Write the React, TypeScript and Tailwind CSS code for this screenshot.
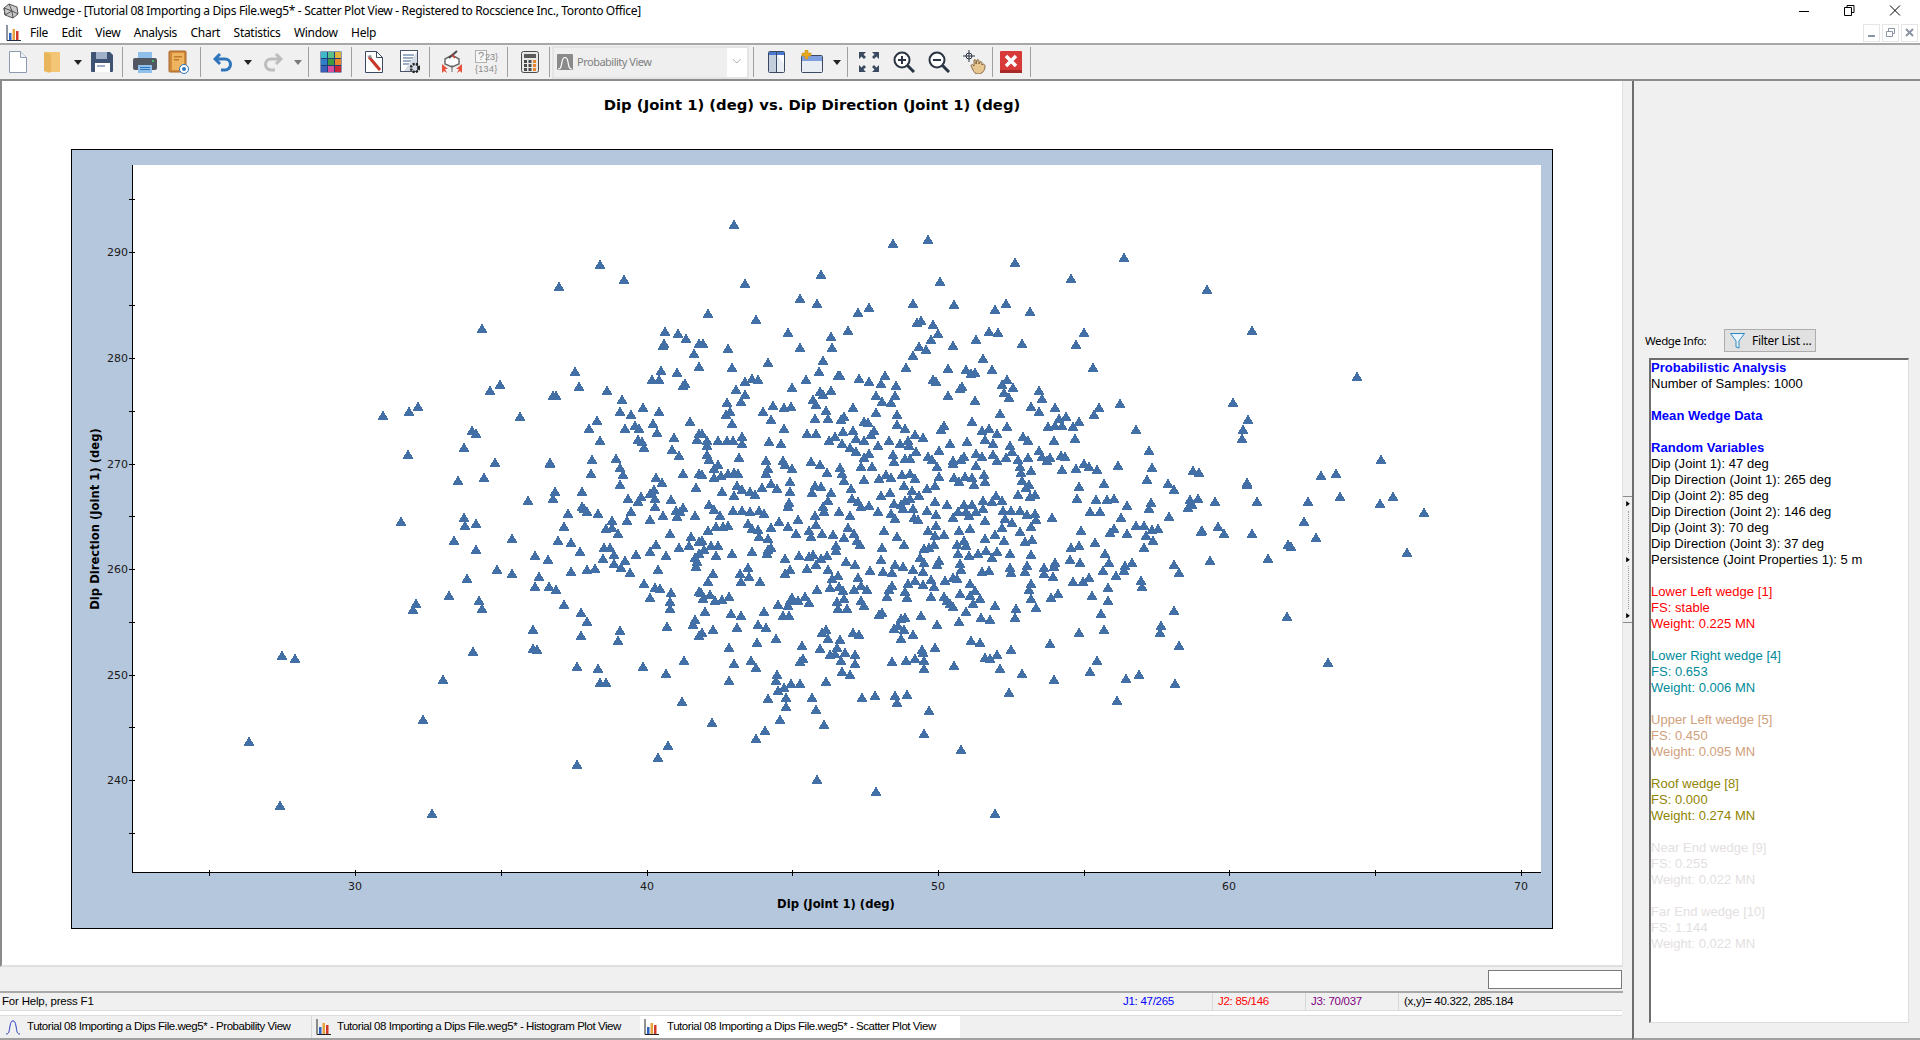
import React from "react";

const ptsA = `1141,138 1213,176 1018,194 787,300 1336,308 1375,313 1399,327 1333,340 1330,344 1437,340 1423,363 1437,396 1066,409 1324,406 1372,411 1297,429 1318,429 1396,440 1388,446 841,442 811,457 1078,447 1162,457 1000,470 1009,470 1207,480 595,498 568,510 489,520 1201,510 1234,518 1270,502 1318,510 901,523 1132,533 1411,535 1299,540 1108,553 1216,553 1245,547 1258,553 757,558 769,566 1312,563 1141,583 1254,581 1266,586 1272,601 1363,576 1432,582 1438,566 733,601 565,619 1357,608 1378,621 1117,631 1188,629 826,639 990,639 991,643 1200,652 1114,667 1209,670 1390,667 1437,667 793,677 714,685 1308,677 1327,690 1201,695 1429,702 1087,712 1006,712 1000,731 1303,707 1291,719 1306,731 1264,725 1225,730 1255,738 1354,733 925,735 1087,751 1093,755 1102,764 1306,751 1390,753 1369,761 1381,765 1372,777 1426,773 1045,770 1135,770 1234,765 1330,773 733,778 544,788 769,793 736,799 1222,786 1177,786 1291,783 1033,801 1159,806 1177,803 1195,819 1351,819 1414,826 703,836 877,831 1015,836 1053,841 1438,839 1309,847 1408,849 1153,854 1170,856 1378,856 1291,864 769,859 1081,864 1183,873 946,874 1249,872 1339,875 1426,879 1438,870 985,884 1150,882 1216,887 1183,895 1204,905 1432,890 1429,903 832,910 1102,910 1126,907 1315,910 877,920 1054,915 1231,917 958,928 741,932 1273,945 946,953 988,953 1009,960 1306,956 1321,958 1354,968 1438,966 687,975 1291,981 778,989 587,996 580,1011 787,1009 1351,991 1351,1009 1033,998 1084,1019 1426,1036 1420,1049 1102,1041 1342,1054 940,1062 1201,1064 1084,1077 1438,1077 1195,1090 760,1117 940,1109 952,1114 187,1128 226,1135 1393,1140 1072,1157 1135,1160 1270,1157 1339,1173 670,1188 1141,1195 1159,1195 1387,1244 610,1290 88,1345 1345,1355 1315,1385 1072,1403 180,1507 637,1527`;
const ptsB = `103,37 580,85 685,75 1273,121 946,133 364,164 136,186 721,181 1114,174 301,224 351,237 640,237 763,241 919,237 25,262 886,252 991,257 475,260 508,247 169,277 650,285 664,280 699,292 445,305 263,311 715,314 868,308 895,310 1153,310 394,320 829,328 694,328 967,338 1129,341 8,340 85,351 301,348 397,348 657,346 679,353 760,344 640,368 850,378 370,381 205,386 97,399 619,399 744,401 797,404 877,404 1180,399 812,416 826,411 358,409 415,420 421,421 556,419 157,427 175,429 136,434 319,429 478,427 508,434 699,429 708,436 921,430 906,442 544,440 589,444 786,447 781,452 939,449 109,455 277,450 394,457 360,461 370,467 136,467 529,470 586,470 744,470 913,463 1017,459 927,476 1026,478 124,485 340,480 349,492 546,485 574,488 825,482 82,488 220,495 253,500 274,497 460,500 993,497 1066,500 1198,500 1261,490 190,510 91,511 379,508 529,513 1018,510 901,515 1183,519 79,519 592,518 344,528 385,528 214,530 433,523 424,530 1099,523 1078,529 1138,535 97,540 493,536 505,538 817,535 591,543 1045,548 1066,547 1087,545 1120,548 253,553 733,545 724,556 616,553 847,560 868,553 922,548 460,558 430,562 523,559 514,568 892,566 1309,556 322,566 349,566 6,567 646,568 670,576 21,583 55,583 82,583 100,583 127,573 127,593 208,586 244,593 388,583 406,573 427,591 469,578 492,583 568,583 600,591 625,585 628,598 751,593 802,586 856,581 880,593 970,573 985,583 1063,583 1126,578 535,596 450,603 22,598 469,611 22,620 649,613 718,609 931,596 937,613 1018,609 1348,609 580,620 508,616 829,618 27,632 118,628 199,635 250,636 334,637 492,627 616,630 631,629 684,625 696,632 792,625 784,631 846,624 880,620 892,635 919,627 955,632 985,628 1027,624 1051,628 1084,622 1096,624 1042,634 583,637 760,636 760,643 55,645 361,644 256,646 421,653 712,651 829,648 961,651 1153,642 1166,649 1255,647 43,654 205,654 277,654 484,651 517,649 1129,654 1087,657 1192,657 1357,652 994,659 964,664 382,664 199,667 85,667 103,666 115,667 427,667 6,669 64,672 493,682 43,678 607,670 631,667 559,669 574,678 538,681 646,680 718,675 762,678 796,674 817,678 853,669 856,688 778,688 433,685 271,687 1342,682 967,685 1213,692 1405,692 187,702 112,699 214,693 346,697 364,700 232,706 454,705 613,697 706,697 823,696 988,695 978,704 1138,700 1423,707 127,708 67,712 151,714 271,714 337,715 394,715 571,715 682,705 637,711 166,720 103,723 543,724 658,723 955,720 991,725 1006,722 889,724 1132,730 457,730 385,735 475,738 616,735 631,732 850,736 907,735 877,738 706,738 1189,733 1222,733 1243,730 1354,740 27,745 268,740 265,750 583,743 741,745 793,745 817,745 484,750 508,748 604,745 1282,748 370,752 43,758 100,762 127,760 151,763 178,760 193,768 373,765 418,763 535,763 610,757 640,757 682,760 775,763 850,757 910,760 934,760 961,760 1348,757 1171,765 1201,765 61,773 346,773 451,775 574,770 586,781 709,772 799,765 829,765 760,778 808,775 982,772 1006,770 1057,778 1264,778 1408,776 295,785 238,790 643,778 655,785 916,781 856,786 1009,784 145,793 85,798 49,801 70,801 349,796 214,804 265,801 445,805 709,800 907,804 937,792 994,801 1309,800 1333,800 1373,806 1357,810 1243,806 157,807 175,810 25,813 328,813 685,812 778,811 811,808 553,811 961,814 1144,813 1231,817 1282,820 289,820 367,820 400,822 463,820 178,827 334,826 433,830 592,827 706,825 733,822 886,823 1339,825 205,832 856,831 913,836 976,840 997,834 1360,836 6,837 793,836 1186,841 472,836 481,847 34,849 55,849 409,851 613,847 772,848 799,850 703,847 1138,850 1333,854 546,854 12,861 157,864 214,856 97,869 205,860 202,870 409,863 673,857 688,855 859,862 892,865 1114,854 1216,869 835,869 49,875 298,875 328,877 340,872 382,875 775,870 808,875 931,869 994,872 364,882 256,882 661,880 877,880 544,884 438,890 1111,884 1141,894 1228,894 1297,894 673,892 718,888 1066,892 349,897 466,897 586,897 610,902 712,897 781,895 982,900 1423,897 1276,901 145,906 322,907 511,912 385,910 640,910 1033,906 1063,904 271,911 931,906 784,910 1210,912 1273,912 39,920 121,921 256,921 550,916 577,919 670,915 847,915 868,914 976,915 934,917 1033,921 1060,928 1438,918 148,928 415,925 475,931 1249,925 397,932 772,932 760,930 1168,930 25,940 124,940 181,940 646,938 736,937 694,935 625,945 1120,940 1150,942 1324,937 484,950 811,945 994,945 670,949 703,953 391,955 418,953 577,950 1327,954 352,960 463,960 502,960 568,960 430,963 988,960 1225,955 616,965 781,970 826,963 3,968 30,973 88,978 1075,972 1177,975 316,978 811,975 694,978 622,980 733,978 562,979 277,982 841,984 1054,981 10,984 46,988 67,986 271,988 295,988 433,985 484,988 742,990 994,985 1225,988 328,994 235,998 265,1001 412,991 493,1002 820,996 751,996 760,1003 886,1001 1009,1006 949,1009 415,1009 442,1008 16,1016 193,1016 94,1021 799,1016 1204,1021 1423,1013 124,1028 250,1028 268,1026 547,1018 538,1024 664,1026 616,1031 604,1034 844,1031 871,1036 946,1033 778,1041 175,1049 712,1049 595,1051 112,1056 199,1056 40,1061 583,1059 613,1061 379,1063 1213,1061 1384,1053 1381,1070 7,1071 367,1071 460,1071 478,1076 1138,1071 640,1076 385,1085 229,1084 421,1087 604,1084 172,1094 814,1089 841,1094 1051,1097 88,1107 307,1102 361,1109 412,1107 706,1107 667,1113 1438,1103 934,1114 436,1120 391,1126 406,1124 466,1126 670,1120 892,1125 856,1132 871,1135 310,1135 301,1143 154,1140 424,1140 577,1142 619,1140 646,1135 673,1140 1192,1140 103,1148 466,1148 763,1152 169,1158 673,1161 901,1160 1171,1168 427,1168 232,1175 451,1175 967,1173 1318,1175 1279,1185 88,1191 229,1191 379,1193 274,1198 301,1198 1063,1188 1426,1200 253,1208 235,1216 928,1221 526,1228 622,1226 586,1228 259,1234 337,1233 487,1234 205,1236 1252,1241 592,1246 259,1257 349,1264 687,1267 241,1289 37,1297 373,1302 196,1318 673,1325 169,1337 784,1365 352,1441 529,1471 886,1527`;
const ptsC = `622,153 757,255 1072,371 700,437 745,480 730,505 727,528 1144,581 580,610 598,614 964,622 1009,616 742,640 742,646 1021,675 595,680 571,684 646,687 772,687 925,687 1141,692 1180,674 577,696 565,703 1273,715 913,738 655,750 607,760 604,764 673,768 757,770 949,778 865,796 874,801 805,832 630,836 1222,817 862,978 985,1094`;

// zoom crops were 3x wide and 2.53x tall
const toPath = (s: string, ox: number, oy: number) =>
  s
    .split(" ")
    .map((p) => {
      const [a, b] = p.split(",").map(Number);
      const x = Math.round(ox + a / 3 - 71);
      const y = Math.round(oy + b / 2.529 - 149) - 1;
      return `M${x} ${y - 5}l5.5 10h-11z`;
    })
    .join("");

const scatter = toPath(ptsA, 220, 210) + toPath(ptsB, 700, 210) + toPath(ptsC, 1000, 230);

const xTicks = [209, 355, 501, 647, 792, 938, 1084, 1229, 1375, 1521];
const xLabels = [
  [355, "30"],
  [647, "40"],
  [938, "50"],
  [1229, "60"],
  [1521, "70"],
] as const;
const yTicks = [199, 252, 305, 358, 411, 464, 516, 569, 622, 675, 727, 780, 833];
const yLabels = [
  [252, "290"],
  [358, "280"],
  [464, "270"],
  [569, "260"],
  [675, "250"],
  [780, "240"],
] as const;

const ScatterChart = () => (
  <svg width="1482" height="780" className="block" fontFamily="'DejaVu Sans', sans-serif">
    <rect x="61" y="16" width="1409" height="707" fill="#ffffff" />
    <path d={scatter} fill="#4270a6" shapeRendering="crispEdges" />
    <g stroke="#000000" strokeWidth="1" shapeRendering="crispEdges">
      <rect x="0.5" y="0.5" width="1481" height="779" fill="none" />
      <path d="M61.5 16V723.5H1470" fill="none" />
      {xTicks.map((x) => (
        <line key={x} x1={x - 71 + 0.5} x2={x - 71 + 0.5} y1="721" y2="727" />
      ))}
      {yTicks.map((y) => (
        <line key={y} x1="58" x2="64" y1={y - 149 + 0.5} y2={y - 149 + 0.5} />
      ))}
    </g>
    <g fontSize="11" fill="#1a1a1a">
      {xLabels.map(([x, t]) => (
        <text key={t} x={x - 71} y="741" textAnchor="middle">
          {t}
        </text>
      ))}
      {yLabels.map(([y, t]) => (
        <text key={t} x="57" y={y - 149 + 4} textAnchor="end">
          {t}
        </text>
      ))}
    </g>
    <text x="765" y="759" textAnchor="middle" fontSize="11.6" fontWeight="700" fill="#000000">
      Dip (Joint 1) (deg)
    </text>
    <text transform="translate(28 370) rotate(-90)" textAnchor="middle" fontSize="11.6" fontWeight="700" fill="#000000">
      Dip Direction (Joint 1) (deg)
    </text>
  </svg>
);

const BarsIcon = ({ line = "#1f2a44" }: { line?: string }) => (
  <svg width="16" height="18" viewBox="0 0 16 18">
    <path d="M1 1v15.5h14" fill="none" stroke={line} strokeWidth="1" />
    <rect x="3" y="9" width="2.5" height="7" fill="#2f63c4" />
    <rect x="6.5" y="5" width="2.5" height="11" fill="#e8a23c" />
    <rect x="10" y="7" width="2.5" height="9" fill="#d23a2a" />
  </svg>
);

const Drop = ({ light = false }: { light?: boolean }) => (
  <svg width="8" height="5" viewBox="0 0 8 5">
    <path d="M0 0h8L4 5z" fill={light ? "#7a7a7a" : "#222222"} />
  </svg>
);

const Sep = () => <div className="w-px h-[30px] bg-[#a0a0a0]" />;

const Slot = ({ className, children }: { className: string; children?: React.ReactNode }) => (
  <div className={`${className} h-full flex items-center justify-center shrink-0`}>{children}</div>
);

const Toolbar = () => (
  <div className="h-[38px] shrink-0 flex items-center bg-[#f0f0f0] border-t-2 border-b-2 border-t-[#a8a8a8] border-b-[#8c8c8c]">
    <Slot className="w-[35px]">
      <svg width="20" height="24" viewBox="0 0 20 24">
        <path d="M1.5 1.5h11l6 6v15h-17z" fill="#ffffff" stroke="#8d9bb0" />
        <path d="M12.5 1.5v6h6" fill="#eef1f5" stroke="#8d9bb0" />
      </svg>
    </Slot>
    <Slot className="w-[36px]">
      <svg width="20" height="24" viewBox="0 0 20 24">
        <path d="M1 2h16v20l-9 0-2 1-5-2z" fill="#f2c675" />
        <path d="M1 2l7 2v18l-3 0-4-1z" fill="#e8b45c" />
      </svg>
    </Slot>
    <Slot className="w-[13px]"><Drop /></Slot>
    <Slot className="w-[36px]">
      <svg width="24" height="24" viewBox="0 0 24 24">
        <path d="M1 3a1 1 0 0 1 1-1h18l3 3v16a1 1 0 0 1-1 1H2a1 1 0 0 1-1-1z" fill="#3f5475" />
        <rect x="6" y="2" width="11" height="7" fill="#9fb0c8" />
        <rect x="5" y="13" width="15" height="9" fill="#ffffff" />
        <rect x="7" y="15" width="8" height="2" fill="#9fb0c8" />
      </svg>
    </Slot>
    <Slot className="w-[4px]"><Sep /></Slot>
    <Slot className="w-[42px]">
      <svg width="24" height="22" viewBox="0 0 24 22">
        <rect x="5" y="1" width="14" height="7" fill="#8fc0ec" />
        <path d="M2 7h20a2 2 0 0 1 2 2v8a2 2 0 0 1-2 2H2a2 2 0 0 1-2-2V9a2 2 0 0 1 2-2z" fill="#525861" />
        <rect x="19" y="9" width="2" height="2" fill="#3fbf6a" />
        <rect x="5" y="14" width="14" height="8" fill="#8fc0ec" />
        <rect x="7" y="16" width="10" height="1" fill="#2f75bb" />
        <rect x="7" y="18" width="10" height="1" fill="#2f75bb" />
      </svg>
    </Slot>
    <Slot className="w-[26px]">
      <svg width="22" height="24" viewBox="0 0 22 24">
        <rect x="1" y="1" width="17" height="21" rx="1" fill="#d08a3c" stroke="#a9692a" />
        <rect x="4" y="3" width="12" height="17" fill="#efb45f" />
        <rect x="6" y="6" width="8" height="1.5" fill="#c27a2c" />
        <rect x="6" y="9" width="5" height="1.5" fill="#c27a2c" />
        <circle cx="16" cy="19" r="4.5" fill="#ffffff" stroke="#2f75bb" />
        <circle cx="16" cy="19" r="2" fill="#2f75bb" />
      </svg>
    </Slot>
    <Slot className="w-[6px]" />
    <Slot className="w-[4px]"><Sep /></Slot>
    <Slot className="w-[42px]">
      <svg width="20" height="20" viewBox="0 0 20 20">
        <path d="M7 2 2 7l5 5M3 7h9a5 5 0 0 1 0 11H8" fill="none" stroke="#2f75bb" strokeWidth="3" />
      </svg>
    </Slot>
    <Slot className="w-[8px]"><Drop /></Slot>
    <Slot className="w-[42px]">
      <svg width="20" height="20" viewBox="0 0 20 20">
        <path d="M13 2l5 5-5 5M17 7H8a5 5 0 0 0 0 11h4" fill="none" stroke="#bdbdbd" strokeWidth="3" />
      </svg>
    </Slot>
    <Slot className="w-[8px]"><Drop light /></Slot>
    <Slot className="w-[12px]"><Sep /></Slot>
    <Slot className="w-[34px]">
      <svg width="22" height="22" viewBox="0 0 22 22">
        <rect x="0.5" y="0.5" width="21" height="21" fill="#1f3f78" />
        {[
          ["#3fb8c8", 1, 1], ["#5cc08a", 8, 1], ["#e2b23a", 15, 1],
          ["#2f7fc8", 1, 8], ["#3f9a3f", 8, 8], ["#e8842c", 15, 8],
          ["#3a5fb8", 1, 15], ["#d84fa0", 8, 15], ["#c8283a", 15, 15],
        ].map(([c, x, y]) => (
          <rect key={`${x}-${y}`} x={x as number} y={y as number} width="6" height="6" fill={c as string} />
        ))}
      </svg>
    </Slot>
    <Slot className="w-[6px]"><Sep /></Slot>
    <Slot className="w-[40px]">
      <svg width="20" height="24" viewBox="0 0 20 24">
        <path d="M1.5 1.5h11l6 6v15h-17z" fill="#ffffff" stroke="#3a4a60" />
        <path d="M12.5 1.5v6h6" fill="none" stroke="#3a4a60" />
        <path d="M5 7l11 13" stroke="#c8362a" strokeWidth="3" />
        <path d="M3 6l4-1 1 4z" fill="#8a8f96" />
      </svg>
    </Slot>
    <Slot className="w-[32px]">
      <svg width="20" height="24" viewBox="0 0 20 24">
        <rect x="0.5" y="0.5" width="17" height="21" fill="#ffffff" stroke="#4a5568" />
        <path d="M3 5h11M3 8h11M3 11h8M3 14h6" stroke="#7c93b4" strokeWidth="1.5" />
        <path d="M17 2 4 21h13z" fill="#d5dce6" />
        <circle cx="15" cy="18" r="4" fill="none" stroke="#222222" strokeWidth="2.5" strokeDasharray="2 1.2" />
      </svg>
    </Slot>
    <Slot className="w-[6px]"><Sep /></Slot>
    <Slot className="w-[40px]">
      <svg width="24" height="24" viewBox="0 0 24 24">
        <path d="M5 9l7-4 7 4v5l-7 3-7-3z" fill="#ffffff" stroke="#6b6b6b" strokeWidth="1.5" />
        <path d="M9 8 17 1" stroke="#4a4a4a" strokeWidth="2" />
        <path d="M12 5l3 3" stroke="#d83a2a" strokeWidth="1.5" />
        <path d="M12 15v7" stroke="#6b6b6b" />
        <path d="M2 14l6 5H5l2 4-3-2-2 2zM22 14l-6 5h3l-2 4 3-2 2 2z" fill="#e8503a" />
      </svg>
    </Slot>
    <Slot className="w-[30px]">
      <div className="relative w-[24px] h-[26px] text-[9px] leading-[11px] text-[#8a8a8a] font-['Liberation_Sans',sans-serif]">
        <div className="absolute left-0 top-[1px] w-[12px] h-[13px] border border-[#b0b0b0] bg-[#f6f6f6] text-center text-[11px] leading-[11px]">?</div>
        <div className="absolute right-[1px] top-[3px]">{"23}"}</div>
        <div className="absolute left-0 top-[15px] tracking-[0.3px]">{"{134}"}</div>
      </div>
    </Slot>
    <Slot className="w-[10px]"><Sep /></Slot>
    <Slot className="w-[35px]">
      <svg width="18" height="22" viewBox="0 0 18 22">
        <rect x="0.5" y="0.5" width="17" height="21" rx="2" fill="#e8e8e8" stroke="#4a4a4a" />
        <rect x="3" y="3" width="12" height="4" fill="#5a5a5a" />
        {[9, 13, 17].map((y) => (
          <g key={y}>
            <rect x="3" y={y} width="3" height="3" fill="#4a4a4a" />
            <rect x="7.5" y={y} width="3" height="3" fill="#4a4a4a" />
            <rect x="12" y={y} width="3" height="3" fill="#e8842c" />
          </g>
        ))}
      </svg>
    </Slot>
    <Slot className="w-[5px]"><Sep /></Slot>
    <div className="w-[197px] h-[33px] shrink-0 border-2 border-[#e4e4e4] bg-white flex items-center">
      <div className="w-[177px] h-full bg-[#efefef] flex items-center pl-[3px] gap-[4px]">
        <svg width="16" height="16" viewBox="0 0 16 16">
          <rect width="16" height="16" rx="1" fill="#8a8a8a" />
          <path d="M1 15c3 0 3-2 4-7 1-6 5-6 6 0 1 5 1 7 4 7" fill="none" stroke="#ffffff" strokeWidth="1.2" />
        </svg>
        <span className="text-[11px] text-[#808080] font-['Noto_Sans',sans-serif] tracking-[-0.5px]">Probability View</span>
      </div>
      <svg width="20" height="10" viewBox="0 0 20 10">
        <path d="M6 2l4 4 4-4" fill="none" stroke="#aaaaaa" />
      </svg>
    </div>
    <Slot className="w-[8px]"><Sep /></Slot>
    <Slot className="w-[39px]">
      <svg width="18" height="24" viewBox="0 0 18 24">
        <rect x="0.5" y="1.5" width="16" height="21" rx="1" fill="#ffffff" stroke="#3a4a60" />
        <rect x="1" y="2" width="15" height="3" fill="#4a78d0" />
        <path d="M1 5h7v17H1z" fill="#c4cfdd" />
        <path d="M9 5l7 9v8H9z" fill="#e8edf3" />
        <path d="M8.5 2v20" stroke="#3a4a60" />
      </svg>
    </Slot>
    <Slot className="w-[32px]">
      <svg width="24" height="24" viewBox="0 0 24 24">
        <rect x="1.5" y="5.5" width="21" height="17" rx="1" fill="#e8edf3" stroke="#3a4a60" />
        <rect x="2" y="6" width="20" height="5" fill="#7f9ee0" />
        <path d="M5 0h3v3h3v3H8v3H5V6H2V3h3z" fill="#e8a81c" stroke="#c48a10" strokeWidth="0.5" />
      </svg>
    </Slot>
    <Slot className="w-[18px]"><Drop /></Slot>
    <Slot className="w-[2px]"><Sep /></Slot>
    <Slot className="w-[42px]">
      <svg width="22" height="22" viewBox="0 0 22 22" fill="#3a4a60">
        <path d="M1 1h7L5.500 3.500 8 6 6 8 3.500 5.500 1 8zM21 1h-7l2.500 2.500L14 6l2 2 2.500-2.500L21 8zM1 21h7l-2.500-2.500L8 16l-2-2-2.500 2.500L1 14zM21 21h-7l2.500-2.500L14 16l2-2 2.500 2.500L21 14z" />
      </svg>
    </Slot>
    <Slot className="w-[28px]">
      <svg width="22" height="22" viewBox="0 0 22 22" fill="none" stroke="#2b3442">
        <circle cx="9" cy="9" r="7.5" strokeWidth="2" fill="#ffffff" />
        <path d="M14.5 14.5 21 21" strokeWidth="3" />
        <path d="M5 9h8M9 5v8" strokeWidth="2" />
      </svg>
    </Slot>
    <Slot className="w-[42px]">
      <svg width="22" height="22" viewBox="0 0 22 22" fill="none" stroke="#2b3442">
        <circle cx="9" cy="9" r="7.5" strokeWidth="2" fill="#ffffff" />
        <path d="M14.5 14.5 21 21" strokeWidth="3" />
        <path d="M5 9h8" strokeWidth="2" />
      </svg>
    </Slot>
    <Slot className="w-[30px]">
      <svg width="24" height="24" viewBox="0 0 24 24">
        <circle cx="6" cy="6" r="3" fill="none" stroke="#2b3442" />
        <path d="M6 0v12M0 6h12" stroke="#2b3442" />
        <path d="M11 10c1-1 2 0 2 1v3l1-4c1-1 2 0 2 1v3l1-2c1-1 2 0 2 1v2l1-1c1 0 2 1 2 2 0 5-3 8-7 8-3 0-4-2-5-4l-2-4c0-1 1-2 2-1l1 1z" fill="#e8c690" stroke="#6b5230" strokeWidth="0.8" />
      </svg>
    </Slot>
    <Slot className="w-[4px]"><Sep /></Slot>
    <Slot className="w-[34px]">
      <svg width="22" height="22" viewBox="0 0 22 22">
        <rect width="22" height="22" rx="1" fill="#d83a3a" />
        <rect y="19" width="22" height="3" fill="#a82828" />
        <path d="M6 5l10 10M16 5 6 15" stroke="#ffffff" strokeWidth="3.5" />
      </svg>
    </Slot>
    <Slot className="w-[4px]"><Sep /></Slot>
  </div>
);

const menus = ["File", "Edit", "View", "Analysis", "Chart", "Statistics", "Window", "Help"];

const MdiButton = ({ children }: { children: React.ReactNode }) => (
  <div className="w-[17px] h-[18px] border border-[#e6e6e6] bg-white flex items-center justify-center">{children}</div>
);

const TitleBar = () => (
  <div className="h-[22px] shrink-0 flex items-center bg-white">
    <div className="w-[23px] pl-[2px] flex items-center">
      <svg width="17" height="16" viewBox="0 0 17 16" fill="#c8c8c8" stroke="#555555" strokeWidth="1">
        <path d="M2 5l5-4 8 3 1 7-5 4-8-3z" />
        <path d="M2 5l8 3 6 3M10 8l1 7M7 1l3 7M2 5l1 7 7-4" fill="none" />
      </svg>
    </div>
    <span className="text-[12px] text-black font-['Noto_Sans',sans-serif] tracking-[-0.33px]">
      Unwedge - [Tutorial 08 Importing a Dips File.weg5* - Scatter Plot View - Registered to Rocscience Inc., Toronto Office]
    </span>
    <div className="ml-auto flex items-center">
      <svg width="46" height="14" viewBox="0 0 46 14"><path d="M3 7.5h10" stroke="#000000" /></svg>
      <svg width="46" height="14" viewBox="0 0 46 14" fill="none" stroke="#000000">
        <path d="M2.5 3.500h7v8h-7zM5 3.500V1.500h7v7h-2.500" />
      </svg>
      <svg width="32" height="14" viewBox="0 0 32 14" fill="none" stroke="#000000">
        <path d="M2 1.500l10 10M12 1.500l-10 10" />
      </svg>
    </div>
  </div>
);

const MenuBar = () => (
  <div className="h-[21px] shrink-0 flex items-center bg-white relative">
    <div className="w-[30px] pl-[6px] flex items-center"><BarsIcon /></div>
    <div className="flex text-[12px] tracking-[-0.3px] text-black font-['Noto_Sans',sans-serif] gap-[13.5px]">
      {menus.map((m) => (
        <span key={m}>{m}</span>
      ))}
    </div>
    <div className="ml-auto pr-[2px] flex gap-[2px]">
      <MdiButton>
        <div className="w-[7px] h-[2px] bg-[#8a94a3] mt-[6px]" />
      </MdiButton>
      <MdiButton>
        <svg width="9" height="9" viewBox="0 0 9 9" fill="none" stroke="#8a94a3">
          <path d="M.5 3.500h6v5h-6zM2.500 3V.5h6v5H7" />
        </svg>
      </MdiButton>
      <MdiButton>
        <svg width="9" height="9" viewBox="0 0 9 9" stroke="#8a94a3" strokeWidth="2">
          <path d="M1 1l7 7M8 1 1 8" />
        </svg>
      </MdiButton>
    </div>
  </div>
);

const StatusPane = ({ className, children }: { className: string; children: React.ReactNode }) => (
  <div className={`${className} h-full flex items-center border-l border-[#d8d8d8] pl-[5px] shrink-0`}>{children}</div>
);

const narrow = "font-['Liberation_Sans',sans-serif] text-[11.5px] tracking-[-0.28px]";
const tabText = "font-['Liberation_Sans',sans-serif] text-[11.5px] tracking-[-0.45px]";

const tabs = ["Probability View", "Histogram Plot View", "Scatter Plot View"];

const BellIcon = () => (
  <svg width="16" height="18" viewBox="0 0 16 18">
    <path d="M1 16c3 0 3-2 4-8 1-7 5-7 6 0 1 6 1 8 4 8" fill="none" stroke="#2f3fc4" />
  </svg>
);

const wedgeInfo: { color: string; bold?: boolean; text: string }[] = [
  { color: "text-[#0000ff]", bold: true, text: "Probabilistic Analysis" },
  { color: "text-black", text: "Number of Samples: 1000" },
  { color: "text-black", text: "" },
  { color: "text-[#0000ff]", bold: true, text: "Mean Wedge Data" },
  { color: "text-black", text: "" },
  { color: "text-[#0000ff]", bold: true, text: "Random Variables" },
  { color: "text-black", text: "Dip (Joint 1): 47 deg" },
  { color: "text-black", text: "Dip Direction (Joint 1): 265 deg" },
  { color: "text-black", text: "Dip (Joint 2): 85 deg" },
  { color: "text-black", text: "Dip Direction (Joint 2): 146 deg" },
  { color: "text-black", text: "Dip (Joint 3): 70 deg" },
  { color: "text-black", text: "Dip Direction (Joint 3): 37 deg" },
  { color: "text-black", text: "Persistence (Joint Properties 1): 5 m" },
  { color: "text-black", text: "" },
  { color: "text-[#ff0000]", text: "Lower Left wedge [1]" },
  { color: "text-[#ff0000]", text: "FS: stable" },
  { color: "text-[#ff0000]", text: "Weight: 0.225 MN" },
  { color: "text-black", text: "" },
  { color: "text-[#008b9b]", text: "Lower Right wedge [4]" },
  { color: "text-[#008b9b]", text: "FS: 0.653" },
  { color: "text-[#008b9b]", text: "Weight: 0.006 MN" },
  { color: "text-black", text: "" },
  { color: "text-[#d2a07c]", text: "Upper Left wedge [5]" },
  { color: "text-[#d2a07c]", text: "FS: 0.450" },
  { color: "text-[#d2a07c]", text: "Weight: 0.095 MN" },
  { color: "text-black", text: "" },
  { color: "text-[#8f8400]", text: "Roof wedge [8]" },
  { color: "text-[#8f8400]", text: "FS: 0.000" },
  { color: "text-[#8f8400]", text: "Weight: 0.274 MN" },
  { color: "text-black", text: "" },
  { color: "text-[#e4e0e0]", text: "Near End wedge [9]" },
  { color: "text-[#e4e0e0]", text: "FS: 0.255" },
  { color: "text-[#e4e0e0]", text: "Weight: 0.022 MN" },
  { color: "text-black", text: "" },
  { color: "text-[#e4e0e0]", text: "Far End wedge [10]" },
  { color: "text-[#e4e0e0]", text: "FS: 1.144" },
  { color: "text-[#e4e0e0]", text: "Weight: 0.022 MN" },
];

const SplitMark = () => (
  <svg width="4" height="6" viewBox="0 0 4 6" className="block ml-[3px]">
    <path d="M0 0l4 3-4 3z" fill="#000000" />
  </svg>
);

const Dots = () => <div className="ml-[5px] h-[46px] border-l border-dotted border-[#9a9a9a]" />;

export default function App() {
  return (
    <div className="w-[1920px] h-[1040px] flex flex-col bg-[#f0f0f0] overflow-hidden">
      <TitleBar />
      <MenuBar />
      <Toolbar />
      <div className="flex-1 flex min-h-0">
        <div className="w-[1632px] shrink-0 flex flex-col">
          <div className="h-[886px] shrink-0 flex">
            <div className="w-[1623px] shrink-0 bg-white border-l-2 border-l-[#8a8a8a] border-r border-r-[#e0e0e0] border-b-2 border-b-[#e0e0e0]">
              <h1 className="w-[1620px] h-[68px] pt-[14px] text-center text-[14.8px] leading-[20px] font-bold text-black font-['DejaVu_Sans',sans-serif]">
                Dip (Joint 1) (deg) vs. Dip Direction (Joint 1) (deg)
              </h1>
              <div className="ml-[69px] w-[1482px] h-[780px] bg-[#b5c7dc]">
                <ScatterChart />
              </div>
            </div>
            <div className="w-[9px] pt-[415px] flex flex-col items-start">
              <div className="w-full border-t border-[#8a8a8a] pt-[4px] pb-[4px] flex flex-col gap-[4px] h-[127px] border-b">
                <SplitMark />
                <Dots />
                <SplitMark />
                <Dots />
                <SplitMark />
              </div>
            </div>
          </div>
          <div className="h-[24px] shrink-0 flex justify-end items-start pt-[3px] pr-[10px]">
            <div className="w-[134px] h-[19px] bg-white border border-[#7a7a7a]" />
          </div>
          <div className="h-[19px] shrink-0 border-t-2 border-[#a8a8a8] flex items-center w-[1623px]">
            <div className={`${narrow} w-[1212px] pl-[2px] text-black flex`}>
              <span className="w-[1121px] tracking-[-0.2px]">For Help, press F1</span>
              <span className="text-[#0000ff]">J1: 47/265</span>
            </div>
            <StatusPane className={`${narrow} w-[93px] text-[#ff0000]`}>J2: 85/146</StatusPane>
            <StatusPane className={`${narrow} w-[93px] text-[#800080]`}>J3: 70/037</StatusPane>
            <StatusPane className={`${narrow} flex-1 text-black`}>(x,y)= 40.322, 285.184</StatusPane>
          </div>
          <div className="h-[6px] shrink-0 w-[1622px] bg-white border-t border-b border-[#dcdcdc]" />
          <div className="h-[22px] shrink-0 flex items-stretch">
            <div className={`${tabText} w-[312px] pl-[5px] flex items-center gap-[6px] border-r border-[#d8d8d8] text-black`}>
              <BellIcon />
              <span className="whitespace-nowrap">Tutorial 08 Importing a Dips File.weg5* - {tabs[0]}</span>
            </div>
            <div className={`${tabText} w-[328px] pl-[4px] flex items-center gap-[5px] text-black`}>
              <BarsIcon line="#222222" />
              <span className="whitespace-nowrap">Tutorial 08 Importing a Dips File.weg5* - {tabs[1]}</span>
            </div>
            <div className={`${tabText} w-[320px] pl-[4px] flex items-center gap-[7px] bg-white text-black`}>
              <BarsIcon line="#222222" />
              <span className="whitespace-nowrap">Tutorial 08 Importing a Dips File.weg5* - {tabs[2]}</span>
            </div>
          </div>
          <div className="h-[2px] shrink-0 bg-[#a0a0a0]" />
        </div>
        <div className="flex-1 border-l-2 border-l-[#6e6e6e] border-b-2 border-b-[#a0a0a0] pl-[11px] pt-[248px]">
          <div className="h-[23px] flex items-center">
            <span className="w-[79px] text-[11.5px] tracking-[-0.4px] text-black font-['Noto_Sans',sans-serif]">Wedge Info:</span>
            <button className="w-[92px] h-[23px] bg-[#e1e1e1] border border-[#adadad] flex items-center pl-[5px] gap-[7px] text-[12px] tracking-[-0.3px] whitespace-nowrap text-black font-['Noto_Sans',sans-serif]">
              <svg width="15" height="16" viewBox="0 0 15 16" fill="#e8f3fb" stroke="#2f8ac4" className="shrink-0">
                <path d="M.5.5h14L9 8v7l-3-1V8z" />
              </svg>
              Filter List ...
            </button>
          </div>
          <div className="mt-[6px] ml-[4px] w-[260px] h-[665px] bg-white border-l-2 border-t-2 border-l-[#6e6e6e] border-t-[#6e6e6e] border-r border-b border-r-[#dcdcdc] border-b-[#dcdcdc] text-[13px] leading-[16px] tracking-[0.03px] font-['Liberation_Sans',sans-serif]">
            {wedgeInfo.map((l, i) => (
              <div key={i} className={`h-[16px] whitespace-nowrap ${l.color} ${l.bold ? "font-bold" : ""}`}>
                {l.text}
              </div>
            ))}
          </div>
        </div>
      </div>
    </div>
  );
}
